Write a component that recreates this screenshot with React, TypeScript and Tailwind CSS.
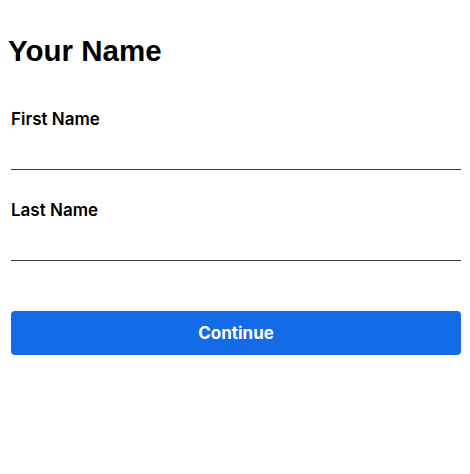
import React, { useState } from "react";

const Field: React.FC<{ label: string; value: string; onChange: (v: string) => void }> = ({
  label,
  value,
  onChange,
}) => (
  <div className="flex flex-col">
    <label className="pt-[1px] text-[17px] leading-6 font-semibold text-black">{label}</label>
    <input
      value={value}
      onChange={(e) => onChange(e.target.value)}
      className="h-[39px] w-full border-b border-[#3a3a3a] bg-transparent outline-none text-[16px]"
    />
  </div>
);

export default function App() {
  const [first, setFirst] = useState("");
  const [last, setLast] = useState("");

  return (
    <div className="min-h-[474px] bg-white font-['Inter',sans-serif] text-black">
      <div className="pt-[34px] pl-[8px] pr-[9px]">
        <h1 className="font-['Liberation_Sans',Arial,sans-serif] text-[29.5px] leading-[34px] font-bold">
          Your Name
        </h1>
        <div className="mt-[38px] flex flex-col gap-[27px] pl-[3px]">
          <Field label="First Name" value={first} onChange={setFirst} />
          <Field label="Last Name" value={last} onChange={setLast} />
        </div>
        <div className="pl-[3px]">
          <button className="mt-[50px] h-11 w-full rounded-[4px] bg-[#136be8] pt-[2px] text-[17px] font-bold text-white">
            Continue
          </button>
        </div>
      </div>
    </div>
  );
}
